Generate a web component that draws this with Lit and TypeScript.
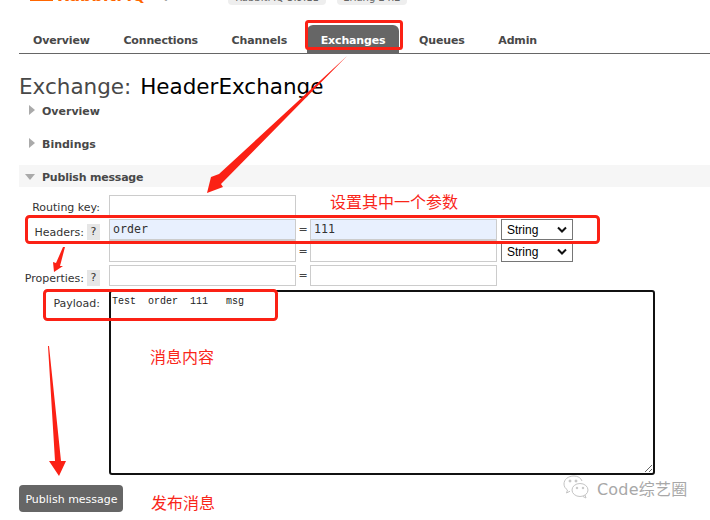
import { LitElement, html, css, svg } from "lit";
import { customElement } from "lit/decorators.js";

@customElement("app-root")
export class AppRoot extends LitElement {
  static styles = css`
    :host { display: block; position: relative; width: 710px; height: 520px; overflow: hidden; background: #fff;
      font-family: "DejaVu Sans", Verdana, sans-serif; color: #484848; font-size: 11px; }
    .top { height: 5px; position: relative; overflow: hidden; }
    .bar { position: absolute; left: 30px; top: 0; width: 23px; height: 1px; background: #f60; }
    .logo { position: absolute; left: 57px; top: -13px; font: bold 16px/17px "DejaVu Sans", sans-serif; color: #f60; white-space: nowrap; }
    .by { position: absolute; left: 157px; top: -11px; font: 11px/13px "DejaVu Sans", sans-serif; color: #999; white-space: nowrap; }
    .pill { position: absolute; top: -9px; height: 14px; line-height: 13px; background: #eee; border-radius: 4px; padding: 0 4px; font-size: 10px; color: #666; white-space: nowrap; box-sizing: border-box; text-align: center; }
    .p1 { left: 228px; width: 98px; } .p2 { left: 337px; width: 70px; }
    nav { display: flex; margin: 19px 0 0 19px; width: 691px; height: 29px; border-bottom: 1px solid #666; align-items: flex-end; }
    nav a { font-weight: bold; height: 28px; line-height: 31px; padding: 0 14px; margin-right: 5.6px; border-radius: 6px 6px 0 0; white-space: nowrap; letter-spacing: -0.15px; color: #484848; }
    nav a.on { background: #666; color: #fff; }
    h1 { font-weight: normal; font-size: 21.5px; line-height: 26px; margin: 20px 0 -1px 19px; color: #484848; word-spacing: 2px; white-space: nowrap; }
    h1 b { font-weight: normal; color: #000; }
    .sec { margin-left: 19px; width: 691px; height: 22px; display: flex; align-items: center; padding: 2px 0 0 10px; box-sizing: border-box; font-weight: bold; gap: 7px; }
    .sec.open { background: #f6f6f6; padding-left: 6px; }
    .sec.open span.t { letter-spacing: -0.2px; }
    .tri { width: 0; height: 0; border-left: 6px solid #aaa; border-top: 5px solid transparent; border-bottom: 5px solid transparent; margin-top: -2px; }
    .tri.d { border-top: 6px solid #aaa; border-bottom: 0; border-left: 5px solid transparent; border-right: 5px solid transparent; margin-top: 0; }
    .s2, .s3 { margin-top: 11px; }
    form { display: grid; grid-template-columns: 109px 1fr; grid-template-rows: 24px 22px 24px 25px 185px; margin-top: 8px; }
    .row { display: contents; }
    label { display: flex; justify-content: flex-end; align-items: flex-start; padding: 5px 9px 0 0; box-sizing: border-box; white-space: nowrap; color: #333; gap: 3px; line-height: 15px; }
    .lower { padding-top: 6px; }
    .q { width: 13px; height: 16px; line-height: 16px; background: #e6e6e6; font-size: 11px; text-align: center; color: #333; margin: -1px 0 0 0; }
    .cells { display: flex; align-items: flex-start; }
    input { box-sizing: border-box; border: 1px solid #ccc; height: 21px; width: 187px; background: #fff; padding: 0 3px; font: 11.6px "DejaVu Sans Mono", monospace; color: #333; display: block; outline: 0; margin: 0; }
    input.fill { background: #e8f0fe; border-bottom: 2px solid #ccc; height: 22px; padding-bottom: 2px; }
    .eq { width: 14px; text-align: center; color: #444; line-height: 22px; }
    .sel { box-sizing: border-box; width: 72px; height: 21px; margin-left: 4px; border: 1px solid #767676; font: 12px "Liberation Sans", sans-serif; color: #000; display: flex; align-items: center; justify-content: space-between; padding: 0 5px 0 5px; background: #fff; }
    textarea { box-sizing: border-box; width: 546px; height: 185px; border: 2px solid #111; border-radius: 3px; font: 10px "Liberation Mono", monospace; color: #222; padding: 4px 1px; margin: 0; resize: both; outline: 0; white-space: pre; display: block; }
    button { display: block; margin: 10px 0 0 19px; width: 104px; height: 27px; background: #666; color: #fff; border: 0; border-radius: 4px; font: 11px "DejaVu Sans", sans-serif; padding: 1px 0 0 1px; }
    .ann { position: absolute; left: 0; top: 0; pointer-events: none; }
    .note { position: absolute; color: #f9261a; font: 16px/20px "Noto Sans CJK SC", sans-serif; white-space: nowrap; }
    .n1 { left: 330px; top: 191px; } .n2 { left: 150px; top: 346px; } .n3 { left: 151px; top: 492px; }
    .wm { position: absolute; left: 597px; top: 476px; color: #a8a8a8; font: 16px "DejaVu Sans", "Noto Sans CJK SC", sans-serif; white-space: nowrap; letter-spacing: .2px; }
    .wmi { position: absolute; left: 560px; top: 474px; }
  `;

  render() {
    return html`
      <div class="top">
        <span class="bar"></span>
        <span class="logo">RabbitMQ</span>
        <span class="by">by VMware</span>
        <span class="pill p1">RabbitMQ 3.9.11</span>
        <span class="pill p2">Erlang 24.2</span>
      </div>
      <nav>
        ${["Overview", "Connections", "Channels", "Exchanges", "Queues", "Admin"].map(
          (t) => html`<a class=${t === "Exchanges" ? "on" : ""}>${t}</a>`
        )}
      </nav>
      <h1>Exchange: <b>HeaderExchange</b></h1>
      <div class="sec"><span class="tri"></span>Overview</div>
      <div class="sec s2"><span class="tri"></span>Bindings</div>
      <div class="sec open s3"><span class="tri d"></span><span class="t">Publish message</span></div>
      <form>
        <div class="row"><label>Routing key:</label><div class="cells"><input /></div></div>
        <div class="row"><label class="lower">Headers: <span class="q">?</span></label>
          <div class="cells"><input class="fill" value="order" /><span class="eq">=</span><input class="fill" value="111" /><div class="sel">String ${this.chev()}</div></div></div>
        <div class="row"><label></label><div class="cells"><input /><span class="eq">=</span><input /><div class="sel">String ${this.chev()}</div></div></div>
        <div class="row"><label class="lower">Properties: <span class="q">?</span></label><div class="cells"><input /><span class="eq">=</span><input /></div></div>
        <div class="row"><label class="lower">Payload:</label><textarea .value=${"Test  order  111   msg"}></textarea></div>
      </form>
      <button>Publish message</button>

      ${this.overlay()}
      <span class="note n1">设置其中一个参数</span>
      <span class="note n2">消息内容</span>
      <span class="note n3">发布消息</span>
      <svg class="wmi" width="34" height="28" viewBox="0 0 34 28" fill="none" stroke="#c4c4c4" stroke-width="1">
        <path d="M14 2c-6 0-10 3.500-10 8 0 2.500 1.300 4.500 3.500 6l-1 3 3.500-1.800"/>
        <path d="M22 7c-1-3-4-5-8-5"/>
        <ellipse cx="20" cy="16" rx="8" ry="6.500"/>
        <path d="M25 21l1 3-3-1.500"/>
        <circle cx="10" cy="7" r="1" fill="#c4c4c4"/><circle cx="16" cy="7" r="1" fill="#c4c4c4"/>
        <circle cx="17" cy="14" r=".8" fill="#c4c4c4"/><circle cx="23" cy="14" r=".8" fill="#c4c4c4"/>
      </svg>
      <span class="wm">Code综艺圈</span>
    `;
  }

  chev() {
    return svg`<svg width="10" height="7" viewBox="0 0 10 7"><path d="M1 1.500l4 4 4-4" fill="none" stroke="#111" stroke-width="2"/></svg>`;
  }

  overlay() {
    return html`<svg class="ann" width="710" height="520" viewBox="0 0 710 520">
      <g fill="none" stroke="#fb2115" stroke-width="3">
        <rect x="306.500" y="21.500" width="95" height="27" rx="2"/>
        <rect x="26.500" y="216.500" width="572" height="26" rx="3"/>
        <rect x="44.500" y="290.500" width="232" height="29" rx="3"/>
      </g>
      <g fill="#fb2115">
        <path d="M347 56L219 174 211 177 207 193 223 187 221 184Z"/>
        <path d="M65 247L60 266 63 266 54 272 53 262 56 263 63 247Z"/>
        <path d="M48 346L49 346 61 461 66 461 59 476 49 461 55 461Z"/>
      </g>
    </svg>`;
  }
}
